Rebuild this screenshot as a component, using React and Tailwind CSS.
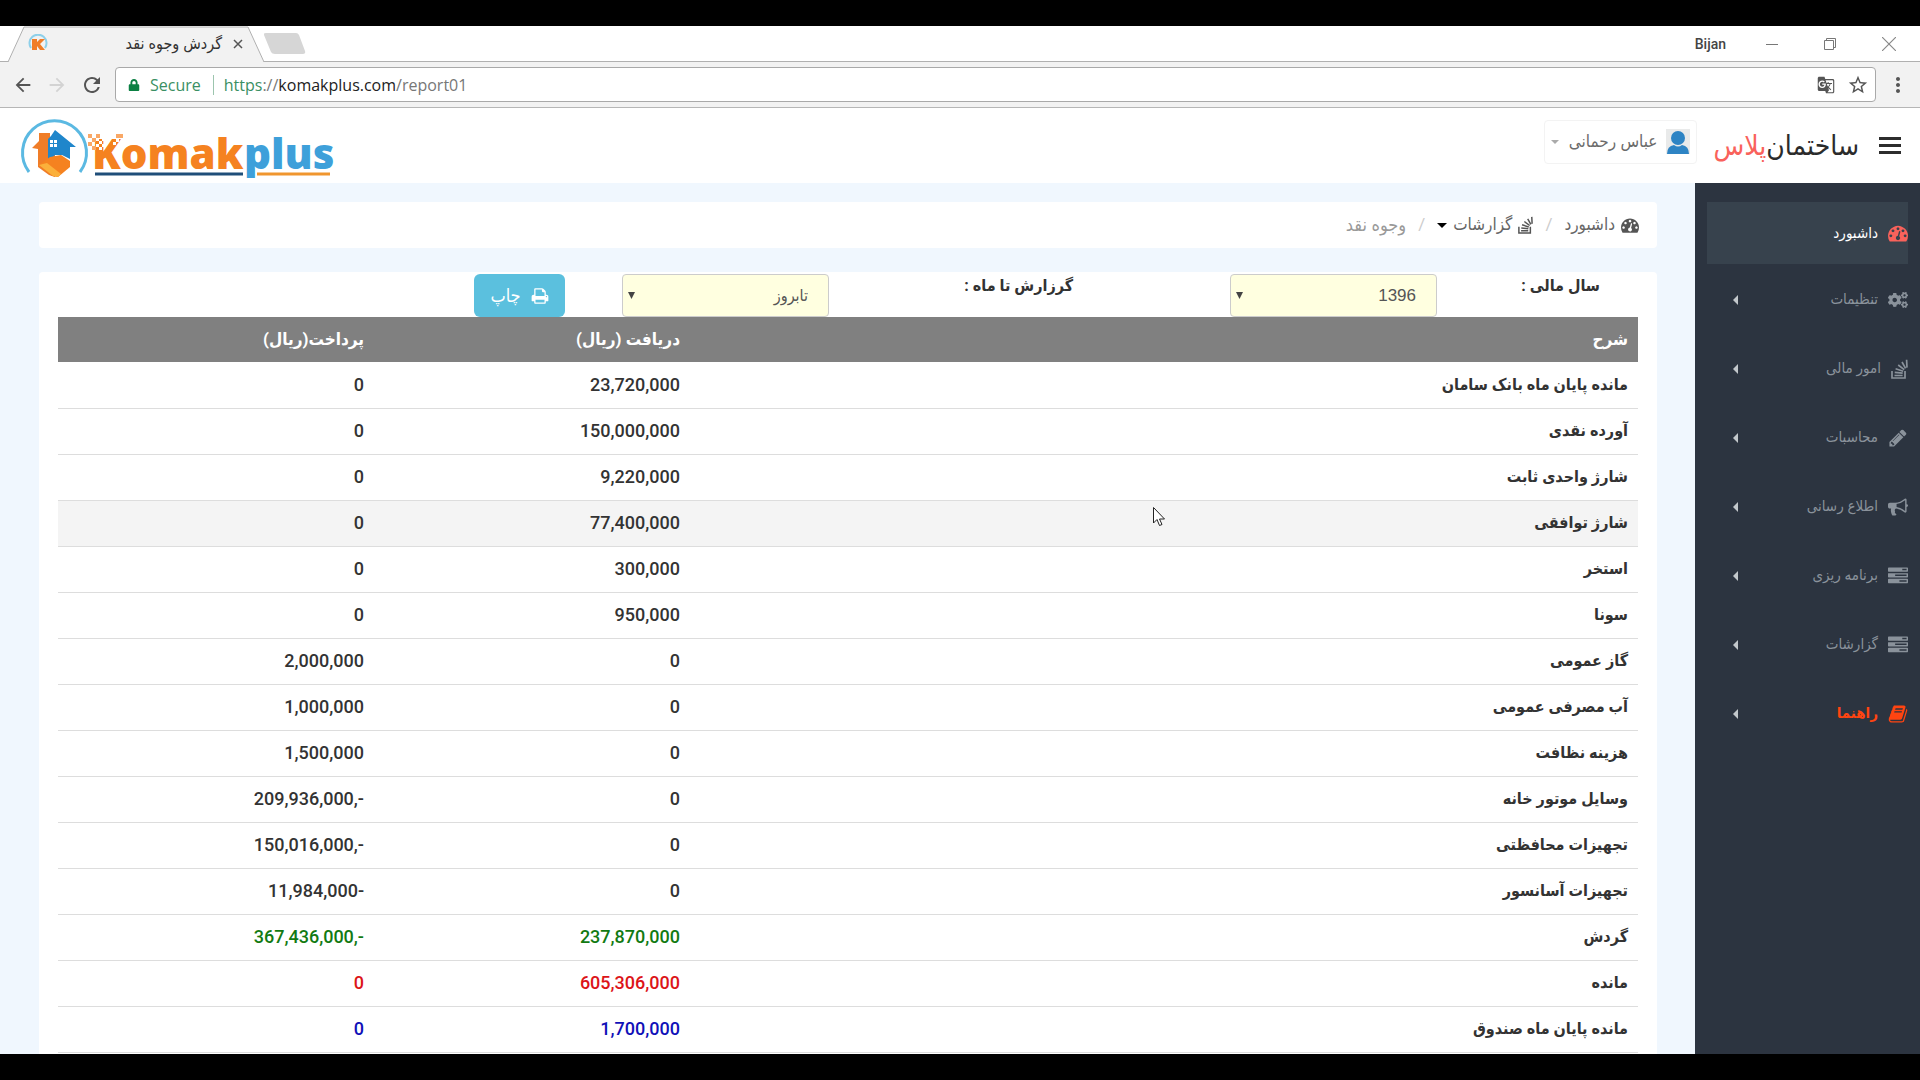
import React from "react";
import { FaCogs, FaLock } from "react-icons/fa";
import { MdArrowBack, MdArrowForward, MdRefresh, MdStarBorder, MdMoreVert, MdGTranslate } from "react-icons/md";

const glyphs = {
  dashboard:
    "M384 1152q0-53-37.5-90.5t-90.5-37.5-90.5 37.5-37.5 90.5 37.5 90.5 90.5 37.5 90.5-37.5 37.5-90.5zm192-448q0-53-37.5-90.5t-90.5-37.5-90.5 37.5-37.5 90.5 37.5 90.5 90.5 37.5 90.5-37.5 37.5-90.5zm428 481l101-382q6-26-7.5-48.5t-38.5-29.5-48 6.5-30 39.5l-101 382q-60 5-107 43.5t-63 98.5q-20 77 20 146t117 89 146-20 89-117q16-60-6-117t-72-91zm660-33q0-53-37.5-90.5t-90.5-37.5-90.5 37.5-37.5 90.5 37.5 90.5 90.5 37.5 90.5-37.5 37.5-90.5zm-640-640q0-53-37.5-90.5t-90.5-37.5-90.5 37.5-37.5 90.5 37.5 90.5 90.5 37.5 90.5-37.5 37.5-90.5zm448 192q0-53-37.5-90.5t-90.5-37.5-90.5 37.5-37.5 90.5 37.5 90.5 90.5 37.5 90.5-37.5 37.5-90.5zm320 448q0 261-141 483-19 29-54 29h-1402q-35 0-54-29-141-221-141-483 0-182 71-348t191-286 286-191 348-71 348 71 286 191 191 286 71 348z",
  pencil:
    "M491 1536l91-91-235-235-91 91v107h128v128h107zm523-928q0-22-22-22-10 0-17 7l-542 542q-7 7-7 17 0 22 22 22 10 0 17-7l542-542q7-7 7-17zm-54-192l416 416-832 832h-416v-416zm683 96q0 53-37 90l-166 166-416-416 166-165q36-38 90-38 53 0 91 38l235 234q37 39 37 91z",
  bullhorn:
    "M1664 640q53 0 90.5 37.5t37.5 90.5-37.5 90.5-90.5 37.5v384q0 52-38 90t-90 38q-417-347-812-380-58 19-91 66t-31 100.5 40 92.5q-20 33-23 65.5t6 58 33.5 55 48 50 61.5 50.5q-29 58-111.5 83t-168.5 11.5-132-55.5q-7-23-29.5-87.5t-32-94.5-23-89-15-101 3.5-98.5 22-110.5h-122q-66 0-113-47t-47-113v-192q0-66 47-113t113-47h480q435 0 896-384 52 0 90 38t38 90v384zm-128 604v-954q-394 302-768 343v270q377 42 768 341z",
  tasks:
    "M1024 1408h640v-128h-640v128zm-384-512h1024v-128h-1024v128zm640-512h384v-128h-384v128zm512 832v256q0 26-19 45t-45 19h-1664q-26 0-45-19t-19-45v-256q0-26 19-45t45-19h1664q26 0 45 19t19 45zm0-512v256q0 26-19 45t-45 19h-1664q-26 0-45-19t-19-45v-256q0-26 19-45t45-19h1664q26 0 45 19t19 45zm0-512v256q0 26-19 45t-45 19h-1664q-26 0-45-19t-19-45v-256q0-26 19-45t45-19h1664q26 0 45 19t19 45z",
  book: "M1703 478q40 57 18 129l-275 906q-19 64-76.5 107.5t-122.5 43.5h-923q-77 0-148.5-53.5t-99.5-131.5q-24-67-2-127 0-4 3-27t4-37q1-8-3-21.5t-3-19.5q2-11 8-21t16.5-23.5 16.5-23.5q23-38 45-91.5t30-91.5q3-10 .5-30t-.5-28q3-11 17-28t17-23q21-36 42-92t25-90q1-9-2.5-32t.5-28q4-13 22-30.5t22-22.5q19-26 42.5-84.5t27.5-96.5q1-8-3-25.5t-2-26.5q2-8 9-18t18-23 17-21q8-12 16.5-30.5t15-35 16-36 19.5-32 26.5-23.5 36-11.5 47.5 5.5l-1 3q38-9 51-9h761q74 0 114 56t18 130l-274 906q-36 119-71.5 153.5t-128.5 34.5h-869q-27 0-38 15-11 16-1 43 24 70 144 70h923q29 0 56-15.5t35-41.5l300-987q7-22 5-57 38 15 59 43zm-1064 2q-4 13 2 22.5t20 9.5h608q13 0 25.5-9.5t16.5-22.5l21-64q4-13-2-22.5t-20-9.5h-608q-13 0-25.5 9.5t-16.5 22.5zm-83 256q-4 13 2 22.5t20 9.5h608q13 0 25.5-9.5t16.5-22.5l21-64q4-13-2-22.5t-20-9.5h-608q-13 0-25.5 9.5t-16.5 22.5z",
  print:
    "M448 1536h896v-256h-896v256zm0-640h896v-384h-160q-40 0-68-28t-28-68v-160h-640v640zm1152 64q0-26-19-45t-45-19-45 19-19 45 19 45 45 19 45-19 19-45zm128 0v416q0 13-9.5 22.5t-22.5 9.5h-224v160q0 40-28 68t-68 28h-960q-40 0-68-28t-28-68v-160h-224q-13 0-22.5-9.5t-9.5-22.5v-416q0-79 56.5-135.5t135.5-56.5h64v-544q0-40 28-68t68-28h672q40 0 88 20t76 48l152 152q28 28 48 76t20 88v256h64q79 0 135.5 56.5t56.5 135.5z",
};

function Glyph({ name, className }) {
  return (
    <svg viewBox="0 0 1792 1792" fill="currentColor" className={className} aria-hidden="true">
      <path d={glyphs[name]} />
    </svg>
  );
}

function StackIcon({ className }) {
  return (
    <svg viewBox="0 0 17 20" fill="none" stroke="currentColor" strokeWidth="1.700" className={className} aria-hidden="true">
      <path d="M1 12V19H14V12M3.500 16.500H11.600M3.700 13.400L11.700 14.200M4.600 9.800L12.200 12.200M7.200 6L13.200 10.600M11 3L14.600 9.300M15.600 .8L16 8.600" />
    </svg>
  );
}

function TabStrip() {
  return (
    <div className="flex h-9 items-center border-b border-[#b0b0b0] bg-white pl-2">
      <div className="relative flex h-9 w-64 shrink-0 items-center pl-5 pr-5">
        <svg viewBox="0 0 256 36" className="absolute inset-0 h-9 w-64" aria-hidden="true">
          <path d="M0 36L16 1H240L256 36Z" fill="#f2f2f2" />
          <path d="M0 36L16 1H240L256 36" fill="none" stroke="#b0b0b0" />
        </svg>
        <svg viewBox="0 0 20 20" className="relative size-5" aria-hidden="true">
          <path d="M3 14A8.500 8.500 0 1 1 17 14" fill="none" stroke="#8ed0ea" strokeWidth="2" />
          <path d="M4 5h5v3l3-3h5l-5 5 5 6h-5l-3-4v4H4z" fill="#f07d28" />
        </svg>
        <span dir="rtl" className="relative mr-2.5 flex-1 text-right text-base text-[#333]">
          گردش وجوه نقد
        </span>
        <button aria-label="Close tab" className="relative flex w-3 justify-center">
          <svg viewBox="0 0 10 10" className="size-2.5" stroke="#555" strokeWidth="1.500">
            <path d="M1 1L9 9M9 1L1 9" />
          </svg>
        </button>
      </div>
      <button aria-label="New tab" className="h-6">
        <svg viewBox="0 0 44 24" className="h-6 w-11">
          <path d="M0 3Q-1 1 2 1H32Q34 1 35 3L41 19Q42 22 39 22H11Q8 22 7 20Z" fill="#d6d6d6" />
        </svg>
      </button>
      <div className="ml-auto flex items-center pr-6">
        <span className="text-sm font-medium text-[#444]">Bijan</span>
        <button aria-label="Minimize" className="ml-10">
          <svg viewBox="0 0 12 12" className="size-3" stroke="#777">
            <path d="M0 6.500H12" />
          </svg>
        </button>
        <button aria-label="Restore" className="ml-[46px]">
          <svg viewBox="0 0 12 12" className="size-3" fill="none" stroke="#777">
            <path d="M.5 2.500H9.500V11.500H.5ZM2.500 2.500V.5H11.500V9.500H9.500" />
          </svg>
        </button>
        <button aria-label="Close" className="ml-[46px]">
          <svg viewBox="0 0 12 12" className="size-3.5" stroke="#888">
            <path d="M0 0L12 12M12 0L0 12" />
          </svg>
        </button>
      </div>
    </div>
  );
}

function Toolbar() {
  return (
    <div className="flex h-[46px] items-center border-b border-[#b6b6b6] bg-[#f2f2f2] pl-3 pr-2.5">
      <button aria-label="Back" className="text-[#555]">
        <MdArrowBack className="size-[22px]" />
      </button>
      <button aria-label="Forward" className="ml-3 text-[#d3d3d3]">
        <MdArrowForward className="size-[22px]" />
      </button>
      <button aria-label="Reload" className="ml-3 text-[#555]">
        <MdRefresh className="size-6" />
      </button>
      <div className="ml-[11px] flex h-[35px] flex-1 items-center rounded-sm border border-[#a9a9a9] bg-white pl-3 pr-1.5 font-['Open_Sans',sans-serif] text-base">
        <FaLock className="size-3 text-[#0b8043]" />
        <span className="ml-2.5 text-[#3a8f63]">Secure</span>
        <span className="mr-2.5 ml-3 h-5 w-px bg-[#9cc5ae]" />
        <span className="flex-1">
          <span className="text-[#3a8f63]">https</span>
          <span className="text-[#777]">://</span>
          <span className="text-[#222]">komakplus.com</span>
          <span className="text-[#777]">/report01</span>
        </span>
        <button aria-label="Translate" className="text-[#555]">
          <MdGTranslate className="size-[18px]" />
        </button>
        <button aria-label="Bookmark" className="ml-3 text-[#555]">
          <MdStarBorder className="size-[22px]" />
        </button>
      </div>
      <button aria-label="Menu" className="ml-2.5 text-[#555]">
        <MdMoreVert className="size-6" />
      </button>
    </div>
  );
}

function Logo() {
  return (
    <svg viewBox="0 -5 316 64" className="h-16 w-[316px]" role="img" aria-label="Komakplus">
      <path d="M10 53A32 32 0 1 1 61 53" fill="none" stroke="#5bb9e2" strokeWidth="3" />
      <path d="M13 29L20 22V14H31V22L36 28V58L30 56L19 48V30Z" fill="#f07d28" />
      <path d="M32 17L36 11L57 28H51V40L43 36L36 36L32 40L29 40V20Z" fill="#1f86cb" />
      <path d="M31 21h3v3h-3zM35 21h3v3h-3zM31 25h3v3h-3zM35 25h3v3h-3z" fill="#fff" />
      <path d="M20 46L31 38L42 36L51 42V48L39 58L33 57Z" fill="#f58220" />
      <path d="M20 46L34 57L39 58L42 55L28 44Z" fill="#fbb03b" />
      <text x="73" y="50" fill="#f58220" className="font-['Open_Sans',sans-serif] text-[42px] font-extrabold">
        Komak
      </text>
      <text x="225" y="50" fill="#3ea0da" className="font-['Open_Sans',sans-serif] text-[42px] font-extrabold">
        plus
      </text>
      <path d="M77 19h3v3h-3zM83 19h3v3h-3zM80 22h3v3h-3zM77 25h3v3h-3zM83 25h3v3h-3zM80 28h3v3h-3zM97 20h3v3h-3zM94 23h3v3h-3zM100 23h3v3h-3z" fill="#fff" />
      <path d="M69 15h4v4h-4zM73 19h4v4h-4zM69 23h4v4h-4zM73 27h4v4h-4zM77 15h4v4h-4zM97 15h7v4h-7z" fill="#f9a866" />
      <path d="M76 55H224" stroke="#1f4e79" strokeWidth="3" />
      <path d="M238 55H311" stroke="#f0962e" strokeWidth="3" />
    </svg>
  );
}

function Header() {
  return (
    <header className="flex h-[75px] items-center bg-white pr-[19px]">
      <button aria-label="منو" className="flex w-[22px] flex-col gap-1">
        <span className="h-[3px] bg-[#2d2d2d]" />
        <span className="h-[3px] bg-[#2d2d2d]" />
        <span className="h-[3px] bg-[#2d2d2d]" />
      </button>
      <h1 className="mr-5 text-[28px] text-[#2b2b2b]">
        {"ساختمان\u200c"}
        <span className="text-[#f9625b]">پلاس</span>
      </h1>
      <button className="mr-[17px] mb-2 flex h-11 items-center rounded-sm border border-[#f3f3f3] px-1.5 text-[17px] text-[#6b6b6b]">
        <svg viewBox="0 0 24 25" className="h-[25px] w-6 bg-[#e9eaea]" aria-hidden="true">
          <circle cx="12" cy="9" r="7" fill="#2e84c4" />
          <path d="M1 25Q1 17 8 16Q12 19 16 16Q23 17 23 25Z" fill="#2e84c4" />
        </svg>
        <span className="mr-2">عباس رحمانی</span>
        <svg viewBox="0 0 8 4" className="mr-2.5 h-1 w-2" fill="#aaa" aria-hidden="true">
          <path d="M0 0H8L4 4Z" />
        </svg>
      </button>
      <div dir="ltr" className="mr-auto pl-[19px]">
        <Logo />
      </div>
    </header>
  );
}

const menu = [
  { label: "تنظیمات", icon: <FaCogs className="size-5" /> },
  { label: "امور مالی", icon: <StackIcon className="h-5 w-[17px]" /> },
  { label: "محاسبات", icon: <Glyph name="pencil" className="size-5" /> },
  { label: "اطلاع رسانی", icon: <Glyph name="bullhorn" className="size-5" /> },
  { label: "برنامه ریزی", icon: <Glyph name="tasks" className="size-5" /> },
  { label: "گزارشات", icon: <Glyph name="tasks" className="size-5" /> },
  { label: "راهنما", icon: <Glyph name="book" className="size-5" />, hot: true },
];

function Sidebar() {
  return (
    <nav className="w-[225px] shrink-0 bg-[#2c3440] px-3 pt-[19px] text-[15px]">
      <a href="#dashboard" className="flex h-[62px] items-center bg-[#37424d] text-white">
        <Glyph name="dashboard" className="size-5 text-[#f9625b]" />
        <span className="mr-2.5">داشبورد</span>
      </a>
      <ul className="mt-px">
        {menu.map((m) => (
          <li key={m.label}>
            <a
              href="#menu"
              className={
                m.hot
                  ? "flex h-[69px] items-center font-bold text-[#ff4411]"
                  : "flex h-[69px] items-center text-[#8a929b]"
              }
            >
              {m.icon}
              <span className="mr-2.5">{m.label}</span>
              <svg viewBox="0 0 5 10" className="ml-[26px] mr-auto h-2.5 w-[5px]" fill="#c3c8cc" aria-hidden="true">
                <path d="M5 0V10L0 5Z" />
              </svg>
            </a>
          </li>
        ))}
      </ul>
    </nav>
  );
}

function Breadcrumb() {
  return (
    <nav aria-label="مسیر" className="flex h-[46px] items-center rounded-sm bg-white pr-[18px] text-[17px] text-[#666]">
      <a href="#dashboard" className="flex items-center gap-1.5">
        <Glyph name="dashboard" className="size-[18px] text-[#555]" />
        داشبورد
      </a>
      <span className="mx-3 text-[#ccc]">/</span>
      <a href="#reports" className="flex items-center gap-1.5">
        <StackIcon className="h-[18px] w-[15px] text-[#555]" />
        گزارشات
        <svg viewBox="0 0 10 5" className="h-[5px] w-2.5" fill="#000" aria-hidden="true">
          <path d="M0 0H10L5 5Z" />
        </svg>
      </a>
      <span className="mx-3 text-[#ccc]">/</span>
      <span className="text-lg text-[#999]">وجوه نقد</span>
    </nav>
  );
}

function Picker({ id, value, font }) {
  return (
    <div className="relative w-[207px] pt-0.5">
      <select
        id={id}
        defaultValue={value}
        className={"h-[43px] w-full appearance-none rounded-sm border border-[#ccc] bg-[#ffffe0] pr-5 pl-6 text-[#555] " + font}
      >
        <option>{value}</option>
      </select>
      <svg viewBox="0 0 8 8" className="pointer-events-none absolute left-1.5 top-5 size-[7px]" fill="#444" aria-hidden="true">
        <path d="M0 0H8L4 8Z" />
      </svg>
    </div>
  );
}

const rows = [
  ["مانده پایان ماه بانک سامان", "23,720,000", "0"],
  ["آورده نقدی", "150,000,000", "0"],
  ["شارژ واحدی ثابت", "9,220,000", "0"],
  ["شارژ توافقی", "77,400,000", "0", "bg-[#f4f4f4]"],
  ["استخر", "300,000", "0"],
  ["سونا", "950,000", "0"],
  ["گاز عمومی", "0", "2,000,000"],
  ["آب مصرفی عمومی", "0", "1,000,000"],
  ["هزینه نظافت", "0", "1,500,000"],
  ["وسایل موتور خانه", "0", "-,209,936,000"],
  ["تجهیزات محافظتی", "0", "-,150,016,000"],
  ["تجهیزات آسانسور", "0", "-11,984,000"],
  ["گردش", "237,870,000", "-,367,436,000", "", "text-[#127a12]"],
  ["مانده", "605,306,000", "0", "", "text-[#dc1418]"],
  ["مانده پایان ماه صندوق", "1,700,000", "0", "", "text-[#1010b8]"],
];

function Report() {
  return (
    <section className="mt-6 flex-1 rounded-t-sm bg-white px-[19px]">
      <form className="grid h-[45px] grid-cols-[163fr_364fr_244fr_264fr_507fr] items-start pr-[38px] text-base">
        <label htmlFor="year" className="pt-0.5 font-bold text-[#333]">
          سال مالی :
        </label>
        <Picker id="year" value="1396" font="font-['Liberation_Sans','DejaVu_Sans',sans-serif] text-[17px]" />
        <label htmlFor="month" className="pt-0.5 font-bold text-[#333]">
          گرزارش تا ماه :
        </label>
        <Picker id="month" value="تابروز" font="text-base" />
        <button
          type="button"
          className="mt-0.5 flex h-[43px] w-[91px] items-center justify-center gap-2.5 rounded-md bg-[#5bc0de] text-lg text-white"
        >
          <Glyph name="print" className="size-[18px]" />
          چاپ
        </button>
      </form>
      <table className="w-full table-fixed border-collapse text-base font-bold text-[#333]">
        <thead>
          <tr className="h-[45px] bg-[#808080] text-right text-[17px] text-white">
            <th className="w-3/5 px-2.5">شرح</th>
            <th className="px-2.5">دریافت (ریال)</th>
            <th className="px-2.5">پرداخت(ریال)</th>
          </tr>
        </thead>
        <tbody>
          {rows.map(([name, income, outcome, bg = "", color = ""]) => (
            <tr key={name} className={"h-[46px] border-b border-[#ddd] " + bg}>
              <td className="px-2.5">{name}</td>
              <td className={"px-2.5 text-lg font-medium " + color}>{income}</td>
              <td className={"px-2.5 text-lg font-medium " + color}>{outcome}</td>
            </tr>
          ))}
        </tbody>
      </table>
    </section>
  );
}

export default function App() {
  return (
    <div className="relative flex h-screen flex-col overflow-hidden bg-black py-[26px] font-['Roboto','DejaVu_Sans_Condensed','DejaVu_Sans',sans-serif]">
      <TabStrip />
      <Toolbar />
      <div dir="rtl" className="flex min-h-0 flex-1 flex-col">
        <Header />
        <div className="flex min-h-0 flex-1">
          <Sidebar />
          <main className="flex min-w-0 flex-1 flex-col overflow-hidden bg-[#f0f7fe] pl-[39px] pr-[38px] pt-[19px]">
            <Breadcrumb />
            <Report />
          </main>
        </div>
      </div>
      <svg viewBox="0 0 12 20" className="pointer-events-none absolute left-[1153px] top-[507px] h-5 w-3" aria-hidden="true">
        <path d="M.5 .5V16L4 12.500L6.500 18.500L9 17.500L6.500 12H11.500Z" fill="#fff" stroke="#222" />
      </svg>
    </div>
  );
}
